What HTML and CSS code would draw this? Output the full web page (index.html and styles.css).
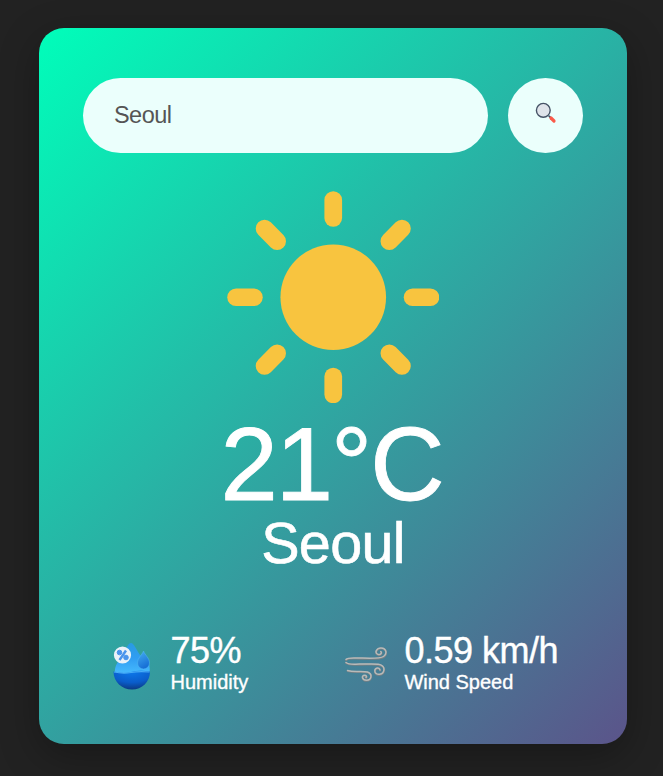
FILE: index.html
```html
<!DOCTYPE html>
<html lang="en">
<head>
<meta charset="utf-8">
<title>Weather</title>
<link rel="stylesheet" href="styles.css">
</head>
<body>
<main class="card">
  <form class="search">
    <input class="search-input" type="text" value="Seoul" aria-label="City" spellcheck="false">
    <button class="search-button" type="button" aria-label="Search">
      <svg class="search-icon" viewBox="0 0 22 22">
        <path d="M13.8 13.8l3 3" stroke="#3d536b" stroke-width="1.8"/>
        <path d="M16 16l3 3" stroke="#fa5a49" stroke-width="3.2" stroke-linecap="round"/>
        <circle cx="8.3" cy="8.3" r="6.9" fill="#dfe4ea" stroke="#465366" stroke-width="1.4"/>
      </svg>
    </button>
  </form>
  <section class="weather">
    <svg class="sun" viewBox="-106.25 -106.25 212.5 212.5" fill="#f8c43f">
      <defs><rect id="ray" x="-8.85" y="-106" width="17.7" height="35.5" rx="8.85"/></defs>
      <circle r="52.8"/>
      <use href="#ray"/>
      <use href="#ray" transform="rotate(45)"/>
      <use href="#ray" transform="rotate(90)"/>
      <use href="#ray" transform="rotate(135)"/>
      <use href="#ray" transform="rotate(180)"/>
      <use href="#ray" transform="rotate(225)"/>
      <use href="#ray" transform="rotate(270)"/>
      <use href="#ray" transform="rotate(315)"/>
    </svg>
    <h1 class="temp">21°C</h1>
    <h2 class="city">Seoul</h2>
  </section>
  <section class="details">
    <div class="detail">
      <svg class="detail-icon" viewBox="0 0 42 50">
        <defs>
          <linearGradient id="drop" x1="0" y1="0" x2="0" y2="1"><stop offset="0" stop-color="#299be2"/><stop offset="0.5" stop-color="#309df2"/><stop offset="1" stop-color="#45b9fd"/></linearGradient>
          <linearGradient id="small-drop" x1="0" y1="0" x2="0.4" y2="1"><stop offset="0" stop-color="#45aff2"/><stop offset="1" stop-color="#176fd6"/></linearGradient>
          <radialGradient id="bowl" cx="0.5" cy="0.05" r="0.95"><stop offset="0" stop-color="#0c78ea"/><stop offset="0.6" stop-color="#0a5dcb"/><stop offset="1" stop-color="#0b3b85"/></radialGradient>
        </defs>
        <path d="M20 2C23 2 25.500 9 29 14L37 21C39 24 39 29 38.500 32H4C3 25 8 19 12 13C15 8 17 2 20 2Z" fill="url(#drop)"/>
        <path d="M2.500 30.500Q12 33 20 31T39 30.500C39 41 31 48.500 21 48.500S2.500 41 2.500 30.500Z" fill="url(#bowl)"/>
        <path d="M3 31Q12 33 20 31.500T38.500 31" fill="none" stroke="#48adf7" stroke-width="1.1"/>
        <path d="M32.500 10C34 14 38.500 17 38.500 22A6 6 0 0 1 26.500 22C26.500 17 31 14 32.500 10Z" fill="url(#small-drop)" stroke="#54b9f4" stroke-width=".5"/>
        <circle cx="11.500" cy="14" r="8.600" fill="#eaf1f8"/>
        <g fill="#4b94ec" stroke="#4b94ec"><path d="M15 9.500L8.500 19" stroke-width="2.400"/><circle cx="8.500" cy="11.500" r="2.300"/><circle cx="15" cy="16.500" r="2.300"/></g>
      </svg>
      <div>
        <p class="value">75%</p>
        <p class="label">Humidity</p>
      </div>
    </div>
    <div class="detail">
      <svg class="detail-icon wind-icon" viewBox="0 0 42 50" fill="none" stroke-linecap="round">
        <defs>
          <g id="gusts">
            <path d="M1 15.500C2 14 5 13.800 10 13.900C20 14 34 15.500 38.500 12.500C42.500 9.800 41.500 4 36 3.900C31.500 3.800 29.500 8.500 32.500 10.200C35 11.500 37.500 9 35.800 7.500"/>
            <path d="M1 18.500C4 21 9 20 15 20.100C25 20.300 38.500 18 39 25C39 31.500 30 32 29.800 27C29.800 23.500 34.500 22.800 35 26"/>
            <path d="M2.500 26.500C9 28.500 17 26.500 22.500 28C28 30 26.500 36.200 21.500 36.200C17 36.200 16 31.500 19.500 31.300C21.500 31.200 22 33 21 33.500"/>
          </g>
        </defs>
        <use href="#gusts" stroke="#788084" stroke-width="2" transform="translate(.2 .6)"/>
        <use href="#gusts" stroke="#b8bab9" stroke-width="1.500"/>
      </svg>
      <div>
        <p class="value">0.59 km/h</p>
        <p class="label">Wind Speed</p>
      </div>
    </div>
  </section>
</main>
</body>
</html>
```
FILE: styles.css
```css
* {
  box-sizing: border-box;
  margin: 0;
  padding: 0;
}

body {
  min-height: 776px;
  background: #222;
  font-family: "Liberation Sans", Arial, sans-serif;
  overflow: hidden;
}

.card {
  width: 588px;
  height: 715.5px;
  margin: 28px 0 0 39px;
  padding: 50px 44px;
  border-radius: 25px;
  background: linear-gradient(135deg, #00feba, #5b548a);
  box-shadow: 0 12px 40px rgba(0, 0, 0, 0.3);
  color: #fff;
}

.search {
  display: flex;
  gap: 20px;
}

.search-input {
  flex: 1;
  min-width: 0;
  height: 75px;
  padding: 0 31px;
  border: 0;
  border-radius: 38px;
  outline: 0;
  background: #ebfffc;
  color: #555;
  font: 23.5px "Liberation Sans", Arial, sans-serif;
  letter-spacing: -0.55px;
}

.search-button {
  display: grid;
  place-items: center;
  width: 75px;
  height: 75px;
  border: 0;
  border-radius: 50%;
  background: #ebfffc;
}

.search-icon {
  width: 22px;
  height: 22px;
  margin-bottom: 5px;
  fill: none;
}

.weather {
  margin-top: 37.5px;
  text-align: center;
}

.sun {
  display: block;
  width: 212.5px;
  height: 212.5px;
  margin: 0 auto;
}

.temp {
  margin-top: 11px;
  padding-right: 3px;
  font-size: 103px;
  font-weight: 500;
  line-height: 102px;
  letter-spacing: -2px;
  -webkit-text-stroke: 0.9px #fff;
}

.city {
  margin-top: -3px;
  font-size: 57.5px;
  font-weight: 400;
  line-height: 60px;
  letter-spacing: -0.7px;
  -webkit-text-stroke: 0.6px #fff;
}

.details {
  display: flex;
  justify-content: space-between;
  margin-top: 57.5px;
  padding: 0 25px 0 28px;
}

.detail {
  display: flex;
  gap: 17.5px;
}

.detail-icon {
  width: 42px;
  height: 50px;
  margin-top: 10px;
}

.wind-icon {
  margin-top: 13px;
}

.value {
  font-size: 36px;
  line-height: 40px;
  letter-spacing: -0.5px;
  -webkit-text-stroke: 0.4px #fff;
}

.label {
  font-size: 20px;
  line-height: 23px;
  -webkit-text-stroke: 0.35px #fff;
}
```
